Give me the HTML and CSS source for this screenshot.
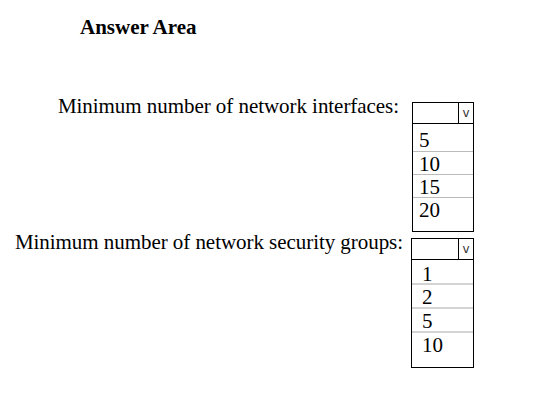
FILE: index.html
```html
<!DOCTYPE html>
<html lang="en">
<head>
  <meta charset="UTF-8">
  <title>Answer Area</title>
  <link rel="stylesheet" href="styles.css">
</head>
<body>
  <div class="answer-area">
    <h2>Answer Area</h2>

    <div class="questions">
      <!-- Network interfaces -->
      <div class="question">
        <span class="label">Minimum number of network interfaces:</span>
        <div class="dropdown">
          <div class="dropdown-head"><span class="arrow">v</span></div>
          <ul class="options">
            <li>5</li>
            <li>10</li>
            <li>15</li>
            <li>20</li>
          </ul>
        </div>
      </div>

      <!-- Network security groups -->
      <div class="question wide">
        <span class="label">Minimum number of network security groups:</span>
        <div class="dropdown">
          <div class="dropdown-head"><span class="arrow">v</span></div>
          <ul class="options thick">
            <li>1</li>
            <li>2</li>
            <li>5</li>
            <li>10</li>
          </ul>
        </div>
      </div>
    </div>
  </div>
</body>
</html>
```

FILE: styles.css
```css
body {
  font-family: "Liberation Serif", "Times New Roman", serif;
  margin: 0;
  padding: 0;
  background: #fff;
  color: #000;
}

.answer-area {
  padding: 15px 0 0 0;
}

h2 {
  margin: 0 0 0 80px;
  font-size: 21px;
  line-height: 24px;
  font-weight: bold;
}

.questions {
  margin-top: 63px;
  display: flex;
  flex-direction: column;
  gap: 6px;
}

.question {
  display: grid;
  grid-template-columns: 399px 62px;
  column-gap: 13px;
  align-items: start;
}

.question.wide {
  grid-template-columns: 403px 63px;
  column-gap: 8px;
}

.label {
  text-align: right;
  font-size: 21px;
  line-height: 22px;
  margin-top: -7px;
  letter-spacing: -0.05px;
}

.dropdown {
  border: 1px solid #000;
  height: 130px;
  box-sizing: border-box;
}

.dropdown-head {
  height: 20px;
  border-bottom: 1px solid #000;
  display: flex;
  justify-content: flex-end;
}

.arrow {
  width: 14px;
  border-left: 1px solid #000;
  font-family: "DejaVu Sans", sans-serif;
  font-size: 12px;
  line-height: 20px;
  text-align: center;
  color: #333;
}

.options {
  list-style: none;
  margin: 0;
  padding: 0;
  font-size: 21px;
}

.options li {
  height: 22px;
  line-height: 24px;
  border-bottom: 1px solid #bbb;
  padding-left: 6px;
}

.options li:first-child {
  height: 27px;
  line-height: 32px;
}

.options li:last-child {
  border-bottom: none;
}

.options.thick li {
  border-bottom: 2px solid #d4d4d4;
  height: 22px;
  padding-left: 10px;
}

.options.thick li:first-child {
  height: 23px;
  line-height: 28px;
}

.options.thick li:last-child {
  border-bottom: none;
}
```
